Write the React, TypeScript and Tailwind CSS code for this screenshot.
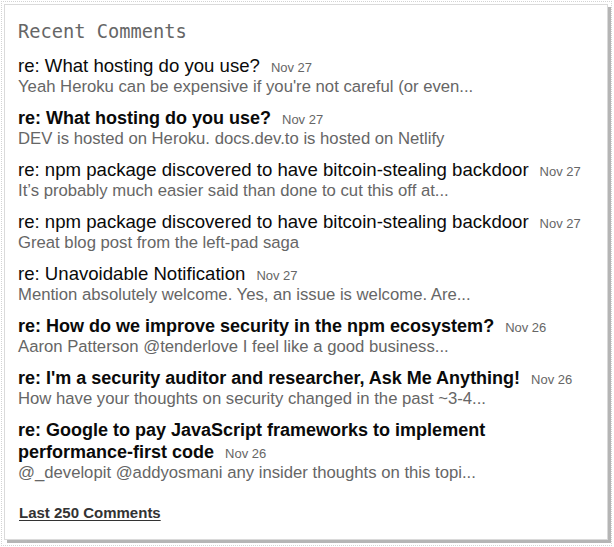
import React from "react";

type C = { title: string; date: string; text: string; bold?: boolean };

const comments: C[] = [
  { title: "re: What hosting do you use?", date: "Nov 27", text: "Yeah Heroku can be expensive if you're not careful (or even..." },
  { title: "re: What hosting do you use?", date: "Nov 27", text: "DEV is hosted on Heroku. docs.dev.to is hosted on Netlify", bold: true },
  { title: "re: npm package discovered to have bitcoin-stealing backdoor", date: "Nov 27", text: "It\u2019s probably much easier said than done to cut this off at..." },
  { title: "re: npm package discovered to have bitcoin-stealing backdoor", date: "Nov 27", text: "Great blog post from the left-pad saga" },
  { title: "re: Unavoidable Notification", date: "Nov 27", text: "Mention absolutely welcome. Yes, an issue is welcome. Are..." },
  { title: "re: How do we improve security in the npm ecosystem?", date: "Nov 26", text: "Aaron Patterson @tenderlove I feel like a good business...", bold: true },
  { title: "re: I'm a security auditor and researcher, Ask Me Anything!", date: "Nov 26", text: "How have your thoughts on security changed in the past ~3-4...", bold: true },
  { title: "re: Google to pay JavaScript frameworks to implement performance-first code", date: "Nov 26", text: "@_developit @addyosmani any insider thoughts on this topi...", bold: true },
];

export default function App() {
  return (
    <div className="w-[614px] h-[547px] bg-white p-px">
      <div className="h-[545px] w-[611px] border border-dotted border-[#d4d4d4] pl-[2px] pt-[2px]">
        <div className="w-[604px] h-[536px] border border-[#dadada] bg-white shadow-[3px_3px_0_#b5b5b5] pl-[13px] pr-[10px] pt-[14px]" style={{ fontFamily: '"Liberation Sans", Arial, sans-serif' }}>
          <h3 className="text-[18.7px] leading-[26px] text-[#666] font-normal" style={{ fontFamily: '"DejaVu Sans Mono", monospace' }}>
            Recent Comments
          </h3>
          <div className="mt-[10px] flex flex-col gap-[10px]">
            {comments.map((c, i) => (
              <div key={i}>
                <div className={`leading-[22px] text-[#0a0a0a] ${c.bold ? "text-[18px] font-bold" : "text-[18.6px] font-normal"}`}>
                  {c.title}
                  <span className="ml-[11px] text-[13px] leading-none font-normal text-[#666]">{c.date}</span>
                </div>
                <div className="text-[16.7px] leading-[20px] text-[#666]">{c.text}</div>
              </div>
            ))}
          </div>
          <div className="mt-[20px] pl-[1px] leading-[20px]">
            <a className="text-[15px] font-bold text-[#333] underline underline-offset-[2px]">Last 250 Comments</a>
          </div>
        </div>
      </div>
    </div>
  );
}
